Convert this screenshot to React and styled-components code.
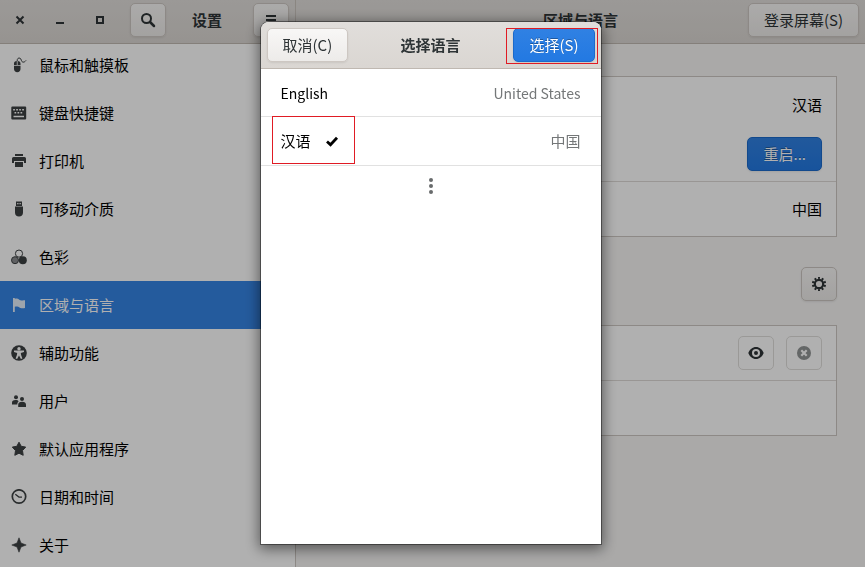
import React, { useLayoutEffect, useRef } from "react";
import styled, { createGlobalStyle, css } from "styled-components";

const GlobalStyle = createGlobalStyle`
  * { box-sizing: border-box; }
  body {
    margin: 0;
    color: #000;
    background: #f6f5f4;
    font-family: "Noto Sans CJK SC", "Noto Sans", sans-serif;
    font-size: 15px;
    line-height: 20px;
  }
  button { font: inherit; cursor: pointer; }
  h1, h2, ul { margin: 0; padding: 0; font-size: inherit; }
`;

const Window = styled.div`
  display: grid;
  grid-template-columns: 296px 1fr;
  grid-template-rows: auto 1fr;
  height: 100vh;
  overflow: hidden;
`;

const HeaderBar = styled.header`
  height: 44px;
  padding: 3px 6px 6px;
  align-items: center;
  border-bottom: 1px solid #bfb8b1;
  background: linear-gradient(#e1dedb, #dad6d2);
  color: #2e3436;
`;

const SideHeader = styled(HeaderBar)`
  display: flex;
  padding-left: 0;
  border-right: 1px solid #c8c2bc;
`;

const MainHeader = styled(HeaderBar)`
  display: grid;
  grid-template-columns: 1fr auto 1fr;
`;

const Title = styled.h1`
  font-weight: 700;
`;

const SideTitle = styled(Title)`
  flex: 1;
  padding-left: 26px;
`;

const WindowControls = styled.div`
  display: flex;
  width: 130px;
`;

const ControlButton = styled.button`
  display: grid;
  place-items: center;
  width: 40px;
  height: 34px;
  padding: 0;
  border: 0;
  background: none;
  color: inherit;
`;

const Button = styled.button`
  display: inline-flex;
  align-items: center;
  justify-content: center;
  height: 34px;
  padding: 0 15px;
  border: 1px solid #cdc7c2;
  border-radius: 5px;
  background: linear-gradient(#f8f7f6, #edebe9);
  box-shadow: 0 1px 2px rgba(0, 0, 0, 0.08);
  color: #2e3436;
  white-space: nowrap;
  ${(p) =>
    p.$suggested &&
    css`
      border-color: #1b6acb;
      background: linear-gradient(#3081e3, #2379e2);
      color: #fff;
      text-shadow: 0 -1px rgba(0, 0, 0, 0.3);
    `}
  ${(p) =>
    p.$icon &&
    css`
      width: ${p.$icon}px;
      padding: 0;
    `}
  ${(p) =>
    p.$flat &&
    css`
      border-color: #e0dedb;
      background: #fff;
      box-shadow: none;
    `}
  &:disabled { color: #929595; }
`;

const LoginButton = styled(Button)`
  grid-column: 3;
  justify-self: end;
`;

const MainTitle = styled(Title)`
  grid-column: 2;
`;

const Sidebar = styled.nav`
  overflow: auto;
  scrollbar-width: none;
  border-right: 1px solid #cdc7c2;
  background: #fff;
`;

const NavList = styled.ul`
  list-style: none;
`;

const NavLink = styled.a`
  display: flex;
  align-items: center;
  gap: 12px;
  height: 48px;
  padding: 0 11px;
  text-decoration: none;
  color: ${(p) => (p.$active ? "#fff" : "#000")};
  background: ${(p) => (p.$active ? "#3584e4" : "transparent")};
  svg { color: ${(p) => (p.$active ? "#e4eefa" : "#3c4042")}; }
`;

const Content = styled.main`
  display: flex;
  flex-direction: column;
  padding: 32px 28px;
  overflow: hidden;
`;

const Card = styled.section`
  border: 1px solid #cdc7c2;
  background: #fff;
`;

const CardRow = styled.div`
  display: flex;
  align-items: center;
  justify-content: flex-end;
  gap: 12px;
  min-height: 54px;
  padding: 0 14px;
  & + & { border-top: 1px solid #dedad7; min-height: 55px; }
`;

const LanguageRow = styled(CardRow)`
  flex-direction: column;
  align-items: flex-end;
  gap: 22px;
  padding: 18px 14px 10px;
`;

const SectionBar = styled.div`
  display: flex;
  justify-content: flex-end;
  padding: 30px 0 24px;
`;

const Backdrop = styled.div`
  position: fixed;
  inset: 0;
  display: flex;
  align-items: center;
  justify-content: center;
  padding: 22px 4px 23px 0;
  background: rgba(0, 0, 0, 0.31);
`;

const Dialog = styled.div`
  display: flex;
  flex-direction: column;
  width: 340px;
  height: 100%;
  border-radius: 8px 8px 0 0;
  background: #fff;
  box-shadow: 0 3px 14px 2px rgba(0, 0, 0, 0.5), 0 0 0 1px rgba(0, 0, 0, 0.4);
`;

const DialogHeader = styled.header`
  display: grid;
  grid-template-columns: 1fr auto 1fr;
  align-items: center;
  height: 47px;
  padding: 0 6px;
  border-bottom: 1px solid #bfb8b1;
  border-radius: 8px 8px 0 0;
  background: linear-gradient(#e1dedb, #dad6d2);
  color: #2e3436;
`;

const Start = styled.div`
  justify-self: start;
`;

const End = styled.div`
  position: relative;
  justify-self: end;
`;

const Marker = styled.span`
  position: absolute;
  border: 1px solid #e01b24;
  pointer-events: none;
`;

const SelectMarker = styled(Marker)`
  inset: 0 -3px -2px -7px;
`;

const LanguageMarker = styled(Marker)`
  inset: -1px auto 1px 11px;
  width: 83px;
`;

const Options = styled.ul`
  list-style: none;
`;

const Option = styled.button`
  position: relative;
  display: flex;
  align-items: center;
  gap: 13px;
  width: 100%;
  height: ${(p) => (p.$selected ? 49 : 48)}px;
  padding: 0 20px;
  border: 0;
  border-bottom: 1px solid #e1e1e1;
  background: none;
  color: #000;
`;

const Latin = styled.span`
  font-size: 14px;
`;

const Country = styled.span`
  margin-left: auto;
  color: #747778;
`;

const MoreButton = styled.button`
  display: grid;
  place-items: center;
  height: 40px;
  padding: 0;
  border: 0;
  background: none;
  color: #686b6c;
`;

const Svg = styled.svg`
  display: block;
  flex: none;
`;

const shapes = {
  close: <path d="M4.5 4.5l7 7M11.5 4.5l-7 7" stroke="currentColor" strokeWidth="2" />,
  minimize: <path d="M4 10h8v2H4z" />,
  maximize: <path d="M5 5h6v6H5z" fill="none" stroke="currentColor" strokeWidth="2" />,
  search: (
    <g fill="none" stroke="currentColor">
      <circle cx="6.5" cy="6.5" r="4.5" strokeWidth="2" />
      <path d="M10 10l4 4" strokeWidth="2.5" strokeLinecap="round" />
    </g>
  ),
  menu: <path d="M3 3h10v2H3zM3 7h10v2H3zM3 11h10v2H3z" />,
  mouse: (
    <>
      <path d="M3 8V6.500C3 5 4 4 5.800 4v4zM6.600 4C8.600 4 9.500 5 9.500 6.500V8H6.600zM3 8.700h6.500V12c0 2-1.300 3.200-3.200 3.200S3 14 3 12z" />
      <path d="M6.200 4C6 1.700 7.400.5 9 1.200c1.700.7.9 3.500 2.800 3.900 1.600.3 2.400-.8 3.200-1.600" fill="none" stroke="currentColor" strokeWidth="1" />
    </>
  ),
  keyboard: (
    <path
      fillRule="evenodd"
      d="M1.300 1.500h12.900a1 1 0 0 1 1 1v11a1 1 0 0 1-1 1H1.300a1 1 0 0 1-1-1v-11a1 1 0 0 1 1-1zM2.200 4v1.600h1.700V4zm3 0v1.600h1.700V4zm3 0v1.600h1.700V4zm3 0v1.600h1.700V4zM3.500 7v1.600h1.700V7zm3 0v1.600h1.700V7zm3 0v1.600h1.700V7zM2.500 10.700v1.500h10.500v-1.500z"
    />
  ),
  printer: <path d="M4 1h8v2H4zM2.500 4h11A1.500 1.500 0 0 1 15 5.500V10h-2V8H3v2H1V5.500A1.500 1.500 0 0 1 2.500 4zM4 9h8v5H4z" />,
  usb: <path fillRule="evenodd" d="M5 .5h6V5H5zM6.200 2v1.300h1.300V2zm2.300 0v1.300h1.300V2zM4 5.600h8v5.900c0 2.500-1.500 4-4 4s-4-1.500-4-4z" />,
  color: (
    <>
      <circle cx="8" cy="4.600" r="3.600" fill="none" stroke="currentColor" strokeWidth="1" />
      <circle cx="4" cy="11.200" r="3.500" fill="currentColor" fillOpacity=".6" stroke="currentColor" strokeWidth="1" />
      <circle cx="11.800" cy="11.200" r="4" />
    </>
  ),
  flag: <path d="M2 1h1.800v14H2zM3.500 2c2-.6 3.500-.5 4.500.4 1 .9 2.500 1.300 6 .9V11c-3 .5-4.800.1-5.800-.8S6 9.300 3.500 9.800z" />,
  access: (
    <>
      <circle cx="8" cy="8" r="7.800" />
      <circle cx="8" cy="3.700" r="1.700" fill="#fff" />
      <path d="M3 5.600h10v1.500l-3.200.8.3 2 1.300 3.500-1.500.6L8 10.600 6.100 14l-1.500-.6 1.300-3.500.3-2L3 7.100z" fill="#fff" />
    </>
  ),
  users: (
    <>
      <circle cx="5" cy="4.200" r="2" />
      <circle cx="11" cy="6" r="2" />
      <path d="M1 11.500V9.800C1 8 2.200 7 4.400 7c1.700 0 2.800.5 3.200 1.400C6.700 9 6.300 10 6.300 11.500zM7.200 14v-2.300c0-1.900 1.400-2.900 3.900-2.900s3.900 1 3.900 2.900V14z" />
    </>
  ),
  star: <path d="M8 1.200l2.200 4.100 4.500.8-3.200 3.500.7 4.700L8 12.200l-4.200 2.100.7-4.700L1.300 6.100l4.500-.8z" strokeLinejoin="round" stroke="currentColor" strokeWidth="1" />,
  clock: (
    <g fill="none" stroke="currentColor">
      <circle cx="8" cy="7.500" r="6.700" strokeWidth="1.700" />
      <path d="M4.300 5.200L8 8l3 .2" strokeWidth="1.300" />
    </g>
  ),
  sparkle: <path d="M8 .8l2 5.200 5.200 2-5.200 2-2 5.200L6 10 .8 8 6 6z" stroke="currentColor" strokeWidth=".6" strokeLinejoin="round" />,
  gear: (
    <g fill="none" stroke="currentColor">
      <circle cx="8" cy="8" r="4.200" strokeWidth="2.200" />
      <circle cx="8" cy="8" r="6" strokeWidth="2.200" pathLength="20" strokeDasharray="1 1" strokeDashoffset=".5" transform="rotate(-90 8 8)" />
    </g>
  ),
  eye: (
    <path
      fillRule="evenodd"
      d="M8 2C4.500 2 1.700 4.500.3 8 1.700 11.500 4.500 14 8 14s6.300-2.500 7.700-6C14.300 4.500 11.500 2 8 2zm0 2a4 4 0 1 1 0 8 4 4 0 0 1 0-8zm0 2a2 2 0 1 0 0 4 2 2 0 0 0 0-4z"
    />
  ),
  remove: (
    <>
      <circle cx="8" cy="8" r="7" />
      <path d="M5.300 5.300l5.400 5.400M10.700 5.300l-5.400 5.400" stroke="#fff" strokeWidth="2.200" />
    </>
  ),
  check: <path d="M3 8.500l3.500 3.300L13 4.700" fill="none" stroke="currentColor" strokeWidth="2.800" />,
  more: (
    <>
      <circle cx="8" cy="2" r="2" />
      <circle cx="8" cy="8" r="2" />
      <circle cx="8" cy="14" r="2" />
    </>
  ),
};

function Icon({ name, size = 16 }) {
  return (
    <Svg width={size} height={size} viewBox="0 0 16 16" fill="currentColor" aria-hidden="true">
      {shapes[name]}
    </Svg>
  );
}

const sections = [
  ["mouse", "鼠标和触摸板"],
  ["keyboard", "键盘快捷键"],
  ["printer", "打印机"],
  ["usb", "可移动介质"],
  ["color", "色彩"],
  ["flag", "区域与语言"],
  ["access", "辅助功能"],
  ["users", "用户"],
  ["star", "默认应用程序"],
  ["clock", "日期和时间"],
  ["sparkle", "关于"],
];

export default function App() {
  const sidebar = useRef(null);

  useLayoutEffect(() => {
    sidebar.current.scrollTop = 3;
  }, []);

  return (
    <>
      <GlobalStyle />
      <Window>
        <SideHeader>
          <WindowControls>
            <ControlButton aria-label="关闭"><Icon name="close" /></ControlButton>
            <ControlButton aria-label="最小化"><Icon name="minimize" /></ControlButton>
            <ControlButton aria-label="最大化"><Icon name="maximize" /></ControlButton>
          </WindowControls>
          <Button $icon={36} aria-label="搜索"><Icon name="search" /></Button>
          <SideTitle>设置</SideTitle>
          <Button $icon={36} aria-label="菜单"><Icon name="menu" /></Button>
        </SideHeader>
        <MainHeader>
          <MainTitle as="h2">区域与语言</MainTitle>
          <LoginButton>登录屏幕(S)</LoginButton>
        </MainHeader>
        <Sidebar ref={sidebar}>
          <NavList>
            {sections.map(([icon, label]) => (
              <li key={icon}>
                <NavLink href="#" $active={icon === "flag"}>
                  <Icon name={icon} />
                  {label}
                </NavLink>
              </li>
            ))}
          </NavList>
        </Sidebar>
        <Content>
          <Card>
            <LanguageRow>
              <span>汉语</span>
              <Button $suggested>重启...</Button>
            </LanguageRow>
            <CardRow>中国</CardRow>
          </Card>
          <SectionBar>
            <Button $icon={36} aria-label="选项"><Icon name="gear" /></Button>
          </SectionBar>
          <Card>
            <CardRow>
              <Button $icon={36} $flat aria-label="预览"><Icon name="eye" /></Button>
              <Button $icon={36} $flat disabled aria-label="移除"><Icon name="remove" /></Button>
            </CardRow>
            <CardRow />
          </Card>
        </Content>
      </Window>
      <Backdrop>
        <Dialog role="dialog" aria-modal="true" aria-labelledby="dialog-title">
          <DialogHeader>
            <Start><Button>取消(C)</Button></Start>
            <Title as="h2" id="dialog-title">选择语言</Title>
            <End>
              <Button $suggested>选择(S)</Button>
              <SelectMarker />
            </End>
          </DialogHeader>
          <Options>
            <li>
              <Option>
                <Latin>English</Latin>
                <Country><Latin>United States</Latin></Country>
              </Option>
            </li>
            <li>
              <Option $selected aria-pressed="true">
                <span>汉语</span>
                <Icon name="check" />
                <Country>中国</Country>
                <LanguageMarker />
              </Option>
            </li>
          </Options>
          <MoreButton aria-label="更多"><Icon name="more" /></MoreButton>
        </Dialog>
      </Backdrop>
    </>
  );
}
